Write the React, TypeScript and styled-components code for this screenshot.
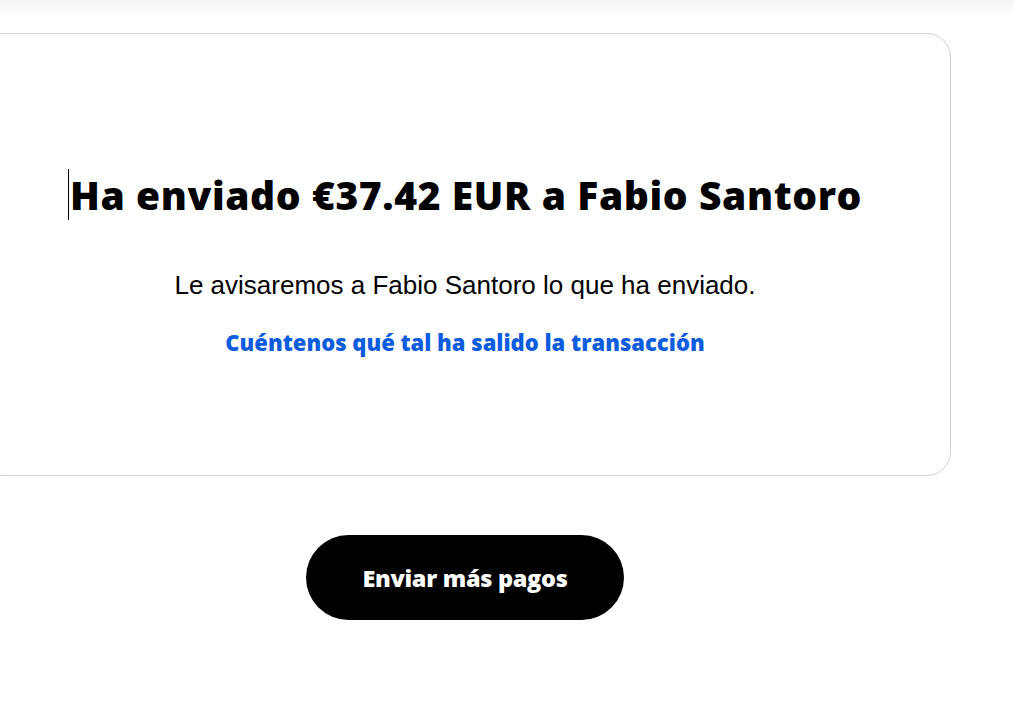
import React from 'react';
import styled, { createGlobalStyle } from 'styled-components';

const GlobalStyle = createGlobalStyle`
  html, body {
    margin: 0;
    padding: 0;
    background: #ffffff;
    overflow: hidden;
  }
  body {
    font-family: 'Liberation Sans', Arial, sans-serif;
    color: #000000;
  }
`;

const App: React.FC = () => {
  return (
    <>
      <GlobalStyle />
      <Page>
        <TopShade />
        <Main>
          <Card>
            <Title>
              <Caret />
              Ha enviado €37.42 EUR a Fabio Santoro
            </Title>
            <Message>Le avisaremos a Fabio Santoro lo que ha enviado.</Message>
            <FeedbackLink href="#">Cuéntenos qué tal ha salido la transacción</FeedbackLink>
          </Card>
          <PrimaryButton type="button">Enviar más pagos</PrimaryButton>
        </Main>
      </Page>
    </>
  );
};

export default App;

const Page = styled.div`
  width: 1013px;
  min-height: 709px;
`;

const TopShade = styled.div`
  height: 16px;
  background: linear-gradient(#f3f3f3, #ffffff);
`;

const Main = styled.main`
  display: flex;
  flex-direction: column;
  align-items: center;
  width: 972px;
  margin-left: -21px;
  padding-top: 17px;
`;

const Card = styled.section`
  box-sizing: border-box;
  width: 972px;
  height: 443px;
  border: 1px solid #d2d2d2;
  border-radius: 24px;
  display: flex;
  flex-direction: column;
  align-items: center;
  padding-top: 135px;
`;

const Title = styled.h1`
  margin: 0;
  display: flex;
  align-items: center;
  font-family: 'Open Sans', Lato, sans-serif;
  font-weight: 800;
  font-size: 39px;
  line-height: 48px;
  letter-spacing: 0.6px;
  color: #000000;
`;

const Caret = styled.span`
  display: inline-block;
  width: 1px;
  height: 51px;
  margin-right: 1px;
  background: #000000;
`;

const Message = styled.p`
  margin: 50px 0 0;
  font-family: 'Liberation Sans', Arial, sans-serif;
  font-size: 26px;
  line-height: 30px;
  color: #000000;
`;

const FeedbackLink = styled.a`
  margin-top: 27px;
  font-family: 'Open Sans', Lato, sans-serif;
  font-weight: 800;
  font-size: 22px;
  line-height: 30px;
  letter-spacing: 0;
  color: #0b5cde;
  text-decoration: none;
`;

const PrimaryButton = styled.button`
  margin-top: 59px;
  width: 318px;
  height: 85px;
  border: none;
  border-radius: 43px;
  background: #000000;
  color: #ffffff;
  font-family: 'Open Sans', Lato, sans-serif;
  font-weight: 800;
  font-size: 23.5px;
  letter-spacing: -0.3px;
  cursor: pointer;
`;
